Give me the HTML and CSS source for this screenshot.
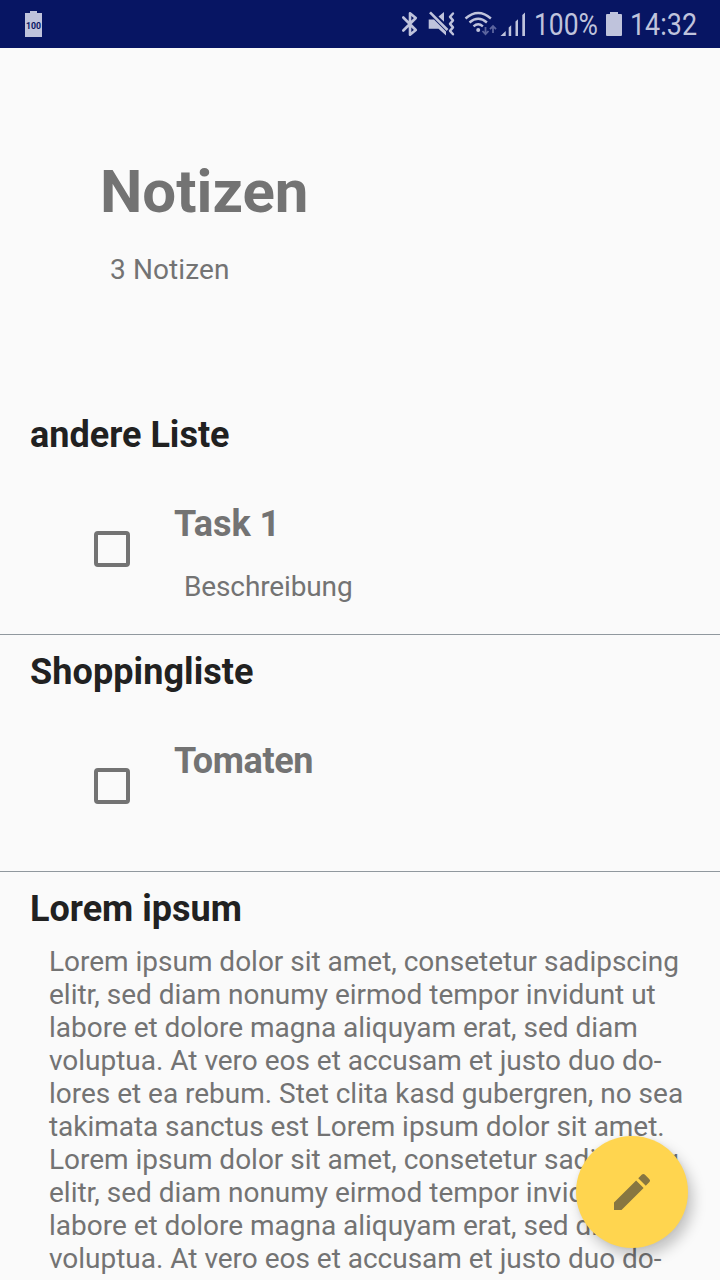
FILE: index.html
```html
<!DOCTYPE html>
<html lang="de">
<head>
<meta charset="utf-8">
<title>Notizen</title>
<link rel="stylesheet" href="styles.css">
</head>
<body>
<div class="screen">
  <div class="status">
    <svg class="notice" width="18" height="27" viewBox="0 0 18 27"><path fill="#bfc3dc" d="M5 0h7v2h5v24H0V2h5z"/><text x="8.5" y="17.800" text-anchor="middle" textLength="15" lengthAdjust="spacingAndGlyphs">100</text></svg>
    <svg class="signals" width="126" height="48" viewBox="400 0 126 48">
      <path fill="none" stroke="#bfc3dc" stroke-width="2.600" stroke-linejoin="round" stroke-linecap="round" d="M403.300 17.500l12.500 12.500-5.800 4.700V13.300l5.800 4.700-12.500 12.500"/>
      <path fill="#bfc3dc" d="M428.700 19.500h5.300l12 12v4L438.500 28.700h-9.800zM444 12v9.800l-5.500-5.300z"/>
      <path stroke="#bfc3dc" stroke-width="2.600" d="M430 12.300l17.500 17.700"/>
      <path fill="none" stroke="#bfc3dc" stroke-width="2.400" stroke-linecap="round" stroke-linejoin="round" d="M453 13.500l-3 3.400 3 3.500-3 3.500 3 3.500-3 3.500 3 3.400"/>
      <g fill="none" stroke="#bfc3dc" stroke-width="2.400"><path d="M465.500 18.500q12.700-11 25.400 0M469.500 22.500q8.700-7.600 17.400 0M473.500 26.300q4.700-4 9.400 0"/></g>
      <circle cx="478.200" cy="30" r="2" fill="#bfc3dc"/>
      <path fill="none" stroke="#5b649e" stroke-width="1.800" d="M485.500 27v7M482.500 31l3 3.200 3-3.200M493 33v-7M490 29.200l3-3.200 3 3.200"/>
      <path fill="#bfc3dc" d="M500.500 36l5.200-5V36zM508.700 27.500l2.500-2.300V36h-2.500zM515.500 21.500l2.500-2.300V36h-2.500zM522.300 15l2.700-2.500V36h-2.700z"/>
    </svg>
    <svg class="readout" width="170" height="48" viewBox="534 0 170 48">
      <text x="534" y="35" textLength="64" lengthAdjust="spacingAndGlyphs">100%</text>
      <path fill="#bfc3dc" d="M610 12h8v2h3q1 0 1 1v20q0 1-1 1h-14q-1 0-1-1V15q0-1 1-1h3z"/>
      <text x="630" y="35" textLength="67" lengthAdjust="spacingAndGlyphs">14:32</text>
    </svg>
  </div>
  <header class="header">
    <h1 class="title">Notizen</h1>
    <p class="count">3 Notizen</p>
  </header>
  <main>
    <section class="note">
      <h2 class="heading">andere Liste</h2>
      <div class="task">
        <span class="checkbox"></span>
        <div><h3 class="name">Task 1</h3><p class="description">Beschreibung</p></div>
      </div>
    </section>
    <section class="note">
      <h2 class="heading heading-wide">Shoppingliste</h2>
      <div class="task">
        <span class="checkbox"></span>
        <div><h3 class="name name-tight">Tomaten</h3></div>
      </div>
    </section>
    <section class="note note-long">
      <h2 class="heading">Lorem ipsum</h2>
      <p class="body">Lorem ipsum dolor sit amet, consetetur sadipscing<br>elitr, sed diam nonumy eirmod tempor invidunt ut<br>labore et dolore magna aliquyam erat, sed diam<br>voluptua. At vero eos et accusam et justo duo do-<br>lores et ea rebum. Stet clita kasd gubergren, no sea<br><span class="tight">takimata sanctus est Lorem ipsum dolor sit amet.</span><br>Lorem ipsum dolor sit amet, consetetur sadipscing<br>elitr, sed diam nonumy eirmod tempor invidunt ut<br>labore et dolore magna aliquyam erat, sed diam<br>voluptua. At vero eos et accusam et justo duo do-</p>
    </section>
  </main>
  <div class="fab">
    <svg width="48" height="48" viewBox="0 0 24 24"><path fill="#877641" d="M3 17.250V21h3.750L17.810 9.940l-3.750-3.750zM20.710 7.040a1 1 0 0 0 0-1.410l-2.340-2.340a1 1 0 0 0-1.410 0l-1.830 1.830 3.750 3.750z"/></svg>
  </div>
</div>
</body>
</html>
```
FILE: styles.css
```css
* { box-sizing: border-box; margin: 0; padding: 0; }
body { background: #fafafa; font-family: Roboto, sans-serif; color: #737373; }
.screen { position: relative; width: 720px; height: 1280px; overflow: hidden; }
.status { display: flex; height: 48px; background: #071563; }
.notice { flex: none; margin: 11px 357px 0 25px; }
.notice text { font: bold 9.5px Roboto, sans-serif; fill: #071563; }
.signals { margin-right: 8px; flex: none; }
.readout { flex: none; }
.readout text { font: 30.5px Roboto, sans-serif; fill: #bfc3dc; }
.header { height: 350px; padding: 109px 100px 0; }
.title { font-size: 60px; line-height: 70px; }
.count { margin: 26px 0 0 10px; font-size: 28px; line-height: 33px; letter-spacing: .1px; }
.note { height: 237px; padding: 16px 30px 0; border-bottom: 1px solid #90989e; }
.heading { font-size: 36px; line-height: 42px; color: #212121; }
.heading-wide { letter-spacing: .08px; }
.task { display: flex; gap: 44px; padding: 47px 0 0 64px; }
.checkbox { width: 36px; height: 36px; margin-top: 28px; border: 4px solid #737373; border-radius: 4px; }
.name { font-size: 36px; line-height: 42px; }
.name-tight { letter-spacing: -.4px; }
.description { margin: 25px 0 0 10px; font-size: 28px; line-height: 33px; letter-spacing: -.13px; }
.note-long { height: auto; border: 0; }
.body { margin: 15px 0 0 19px; font-size: 28px; line-height: 33px; white-space: nowrap; letter-spacing: -.015px; }
.tight { letter-spacing: -.045px; }
.fab { position: absolute; left: 576px; top: 1136px; width: 112px; height: 112px; border-radius: 50%; background: #ffd54f; box-shadow: 5px 8px 14px rgba(0,0,0,.22), 0 0 4px rgba(0,0,0,.06); display: flex; align-items: center; justify-content: center; }
```
